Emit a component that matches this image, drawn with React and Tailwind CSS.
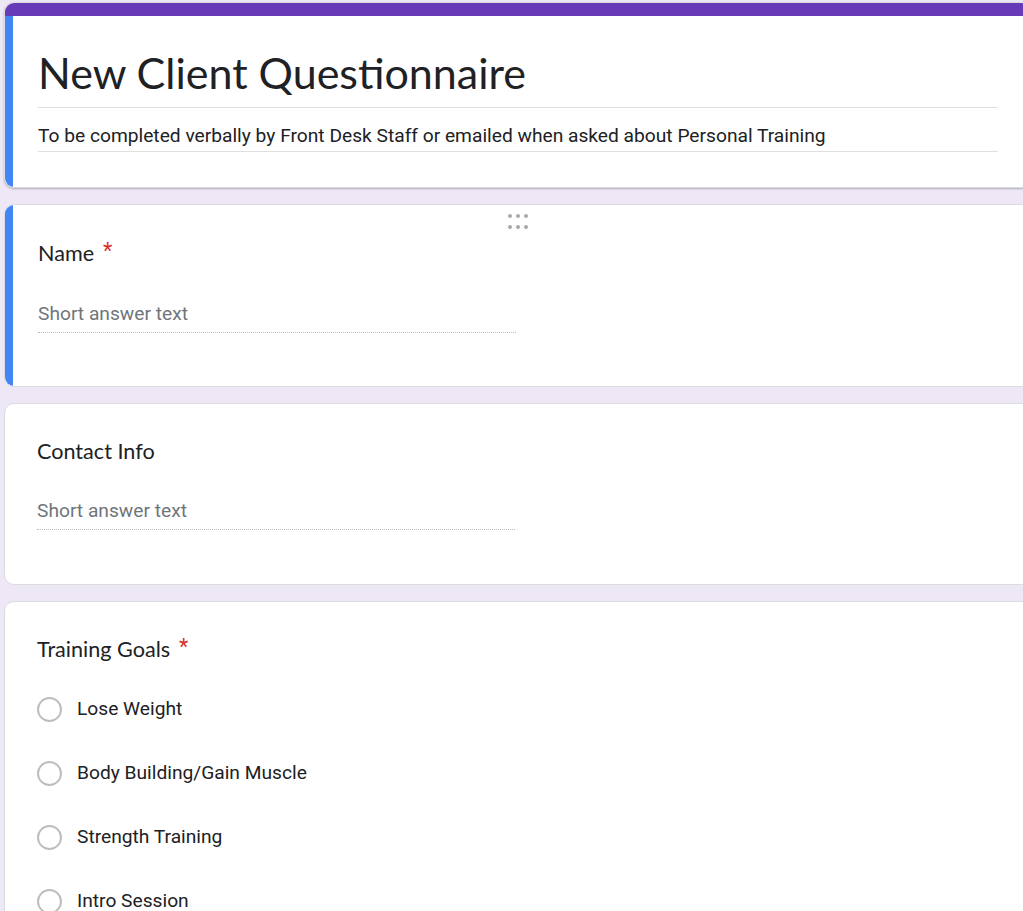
const titleFont = { fontFamily: '"Lato", "Open Sans", sans-serif' };

function Asterisk() {
  return <span className="ml-[9px] relative -top-[3px] text-[#d93025]" style={{ fontFamily: 'Roboto, sans-serif' }}>*</span>;
}

function DragHandle() {
  return (
    <div className="flex justify-center pt-[9px] h-[27px]">
      <div className="grid grid-cols-3 gap-x-[4px] gap-y-[3px]">
        {[0, 1, 2, 3, 4, 5].map((i) => (
          <span key={i} className="block w-[4px] h-[4px] rounded-full bg-[#a8a8a8]" />
        ))}
      </div>
    </div>
  );
}

function ShortAnswer({ label, required }) {
  return (
    <>
      <div className="text-[21.6px] leading-[28px] text-[#202124]" style={titleFont}>
        {label}
        {required && <Asterisk />}
      </div>
      <div className="mt-[34px] w-[478px] border-b border-dotted border-[#bdbdbd] pb-[6px] text-[19.2px] leading-[24px] text-[#70757a] font-['Roboto',sans-serif]">
        Short answer text
      </div>
    </>
  );
}

function Radio({ label }) {
  return (
    <div className="flex items-center h-[64px]">
      <span className="block w-[25px] h-[25px] rounded-full border-[2px] border-[#bdbdbd]" />
      <span className="ml-[15px] text-[19.2px] text-[#202124] font-['Roboto',sans-serif]">{label}</span>
    </div>
  );
}

export default function App() {
  return (
    <div className="w-[1023px] h-[911px] overflow-hidden bg-[#ede7f6] pt-[2px] pl-[4px]">
      <div className="flex flex-col gap-[16px] w-[1027px]">
        {/* header card */}
        <div className="rounded-[10px] overflow-hidden bg-white border border-[#dadce0] shadow-[0_1px_2px_rgba(60,64,67,0.35)]">
          <div className="h-[13px] bg-[#673ab7]" />
          <div className="flex h-[171px]">
            <div className="w-[8px] bg-[#4285f4]" />
            <div className="flex-1 pl-[25px] pr-[32px]">
              <div className="pt-[31px] pb-[8px] border-b-[1.5px] border-[#e0e0e0] text-[43px] leading-[52px] text-[#202124]" style={titleFont}>
                New Client Questionnaire
              </div>
              <div className="pt-[16px] pb-[3px] border-b-[1.5px] border-[#e0e0e0] text-[19.2px] leading-[24px] text-[#202124] font-['Roboto',sans-serif]">
                To be completed verbally by Front Desk Staff or emailed when asked about Personal Training
              </div>
            </div>
          </div>
        </div>

        {/* Name */}
        <div className="rounded-[10px] overflow-hidden bg-white border border-[#dadce0] flex h-[183px]">
          <div className="w-[8px] bg-[#4285f4]" />
          <div className="flex-1 pl-[25px] pr-[32px]">
            <DragHandle />
            <div className="pt-[7px]">
              <ShortAnswer label="Name" required />
            </div>
          </div>
        </div>

        {/* Contact Info */}
        <div className="rounded-[10px] overflow-hidden bg-white border border-[#dadce0] h-[182px] pl-[32px] pr-[32px] pt-[33px]">
          <ShortAnswer label="Contact Info" />
        </div>

        {/* Training Goals */}
        <div className="rounded-[10px] overflow-hidden bg-white border border-[#dadce0] h-[400px] pl-[32px] pr-[32px] pt-[33px]">
          <div className="text-[21.6px] leading-[28px] text-[#202124]" style={titleFont}>
            Training Goals
            <Asterisk />
          </div>
          <div className="mt-[13px]">
            <Radio label="Lose Weight" />
            <Radio label="Body Building/Gain Muscle" />
            <Radio label="Strength Training" />
            <Radio label="Intro Session" />
          </div>
        </div>
      </div>
    </div>
  );
}
